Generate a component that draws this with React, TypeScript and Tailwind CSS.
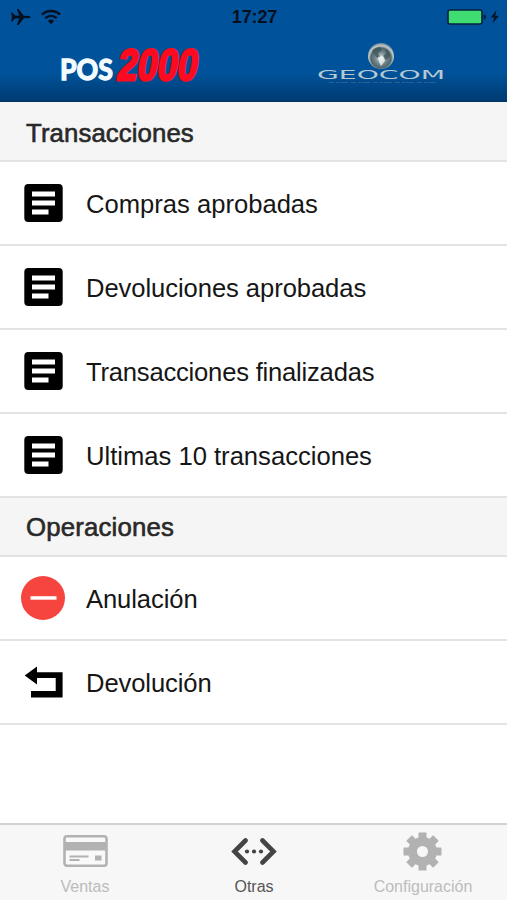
import type { ReactNode } from "react";

const font = "font-['Liberation_Sans',Arial,sans-serif]";

function StatusBar() {
  return (
    <div className="relative flex h-[34px] items-center justify-between pl-[10px] pr-[7px]">
      <div className="flex items-center gap-[9px]">
        <svg width="22" height="18" viewBox="0 0 22 18" fill="#04101f">
          <path d="M1 4.6h1.500l2.500 3 4.300.2L6.800 1h1.800l5.200 6.800 4.600.1c1.600.1 2.400.6 2.400 1.100s-.8 1-2.400 1.100l-4.600.1L8.600 17H6.800l2.500-6.800-4.300.2-2.500 3H1L2 9z" />
        </svg>
        <svg width="20" height="16" viewBox="0 0 20 16" fill="none" stroke="#04101f">
          <path d="M1 5.600a13 13 0 0 1 18 0" strokeWidth="2.300" />
          <path d="M4.300 9.200a8.200 8.200 0 0 1 11.400 0" strokeWidth="2.300" />
          <path d="M6.900 12a4.600 4.600 0 0 1 6.200 0L10 15.200z" fill="#04101f" stroke="none" />
        </svg>
      </div>
      <span className="absolute inset-x-0 pl-[2px] text-center text-[18px] font-bold leading-[34px] tracking-[-0.1px] text-[#04101f]">
        17:27
      </span>
      <svg width="53" height="18" viewBox="0 0 53 18">
        <rect x="1" y="2" width="34" height="14" rx="2" fill="#3fdc72" stroke="#06213f" strokeWidth="1.600" />
        <path d="M36.500 6.200c2 .6 2.600 1.600 2.600 2.800s-.6 2.200-2.600 2.800z" fill="#06213f" />
        <path d="M49.500 2 43.500 9.500h3.700L45.500 15.500l6.500-7.700h-3.700z" fill="#06172d" />
      </svg>
    </div>
  );
}

function Logos() {
  return (
    <svg width="507" height="68" viewBox="0 34 507 68" className="block">
      <defs>
        <radialGradient id="globe" cx="50%" cy="58%" r="55%">
          <stop offset="0" stopColor="#e2eaec" />
          <stop offset="0.4" stopColor="#75898f" />
          <stop offset="0.7" stopColor="#50666d" />
          <stop offset="0.86" stopColor="#c3cdce" />
          <stop offset="1" stopColor="#7e929b" />
        </radialGradient>
      </defs>
      <text x="60" y="80" fontFamily="Lato, sans-serif" fontSize="29" fontWeight="bold" fill="#f4fbff" stroke="#f4fbff" strokeWidth="1.300" textLength="53" lengthAdjust="spacingAndGlyphs">
        POS
      </text>
      <text transform="translate(116 79.500) skewX(-9)" fontFamily="'Liberation Sans', sans-serif" fontSize="44" fontWeight="bold" fill="#fb0a20" stroke="#fb0a20" strokeWidth="2.800" strokeLinejoin="round" textLength="80" lengthAdjust="spacingAndGlyphs">
        2000
      </text>
      <circle cx="381" cy="56" r="13" fill="url(#globe)" />
      <path d="M372 51c2-3 5-4 8-4l2 3-4 3 2 4-3 1-3-4zM385 49c3 1 5 4 5 7l-4 4-3-4 3-3z" fill="#3d545a" opacity="0.75" />
      <path d="M378 57l5-1 2 5-4 5-2-4z" fill="#eef4f4" opacity="0.8" />
      <text x="317" y="79" fontFamily="'DejaVu Sans', sans-serif" fontSize="12" fill="#b8c8d2" textLength="128" lengthAdjust="spacingAndGlyphs">
        GEOCOM
      </text>
      <path d="M329 82.500H437" stroke="#47749b" strokeWidth="1" strokeDasharray="5 2 3 1 8 3" opacity="0.55" />
    </svg>
  );
}

function DocIcon() {
  return (
    <svg width="44" height="44" viewBox="0 0 44 44">
      <rect x="3.300" y="3" width="38.400" height="38" rx="4" />
      <path d="M11 10.500h23v5H11zM11 19.500h23v5H11zM11 28.500h16.500v5H11z" fill="#fff" />
    </svg>
  );
}

function MinusIcon() {
  return (
    <svg width="44" height="44" viewBox="0 0 44 44">
      <circle cx="22" cy="22" r="22" fill="#f6443f" />
      <path d="M9.500 20.200h26v3.500h-26z" fill="#fff" />
    </svg>
  );
}

function ReturnIcon() {
  return (
    <svg width="44" height="44" viewBox="0 0 44 44">
      <path d="M3.700 15.500 16 6.500v5.800h25.600v25.300H10V31h24.700V18H16v6.500z" />
    </svg>
  );
}

function SectionTitle({ children, className }: { children: string; className: string }) {
  return (
    <h2 className={`h-[58px] bg-[#f5f5f5] pl-[26px] text-[25.8px] font-normal text-[#292929] [-webkit-text-stroke:0.6px_#292929] ${className}`}>
      {children}
    </h2>
  );
}

function Row({ icon, label, className = "" }: { icon: ReactNode; label: string; className?: string }) {
  return (
    <li className="flex h-[84px] items-center gap-[21px] border-t-2 border-[#e3e3e3] pl-[21px]">
      {icon}
      <span className={`pt-[2px] text-[25.6px] text-[#161616] ${className}`}>{label}</span>
    </li>
  );
}

function Tab({ icon, label, active }: { icon: ReactNode; label: string; active?: boolean }) {
  return (
    <button className={`flex flex-1 flex-col items-center pt-[4px] ${active ? "text-[#444]" : "text-[#b2b2b2]"}`}>
      {icon}
      <span className={`mt-[2px] pl-px text-[16px] leading-[20px] ${active ? "text-[#555]" : "text-[#bcbcbc]"}`}>{label}</span>
    </button>
  );
}

const transactions = [
  { label: "Compras aprobadas", className: "" },
  { label: "Devoluciones aprobadas", className: "tracking-[-0.07px]" },
  { label: "Transacciones finalizadas", className: "tracking-[-0.21px]" },
  { label: "Ultimas 10 transacciones", className: "" },
];

export default function App() {
  return (
    <div className={`flex h-[900px] w-[507px] flex-col overflow-hidden bg-white ${font}`}>
      <header className="h-[102px] shrink-0 bg-[linear-gradient(#00539b_0px,#00539b_72px,#003c73_100px,#002f5c_102px)]">
        <StatusBar />
        <Logos />
      </header>

      <main className="flex-1">
        <SectionTitle className="pt-[2px] leading-[58px] tracking-[0.08px]">Transacciones</SectionTitle>
        <ul>
          {transactions.map((item) => (
            <Row key={item.label} icon={<DocIcon />} {...item} />
          ))}
        </ul>
        <div className="border-t-2 border-[#e3e3e3]">
          <SectionTitle className="leading-[58px] tracking-[0.17px]">Operaciones</SectionTitle>
        </div>
        <ul className="-mt-px border-b-2 border-[#e3e3e3]">
          <Row icon={<MinusIcon />} label="Anulación" className="tracking-[-0.1px]" />
          <Row icon={<ReturnIcon />} label="Devolución" className="tracking-[-0.1px]" />
        </ul>
      </main>

      <nav className="flex h-[77px] shrink-0 border-t-2 border-[#d2d2d2] bg-[#f7f7f7]">
        <Tab
          label="Ventas"
          icon={
            <svg width="46" height="46" viewBox="0 0 46 46" fill="currentColor">
              <rect x="2.500" y="7.200" width="42" height="29.500" rx="2.500" fill="#f9f9f9" stroke="currentColor" strokeWidth="2.600" />
              <path d="M2.500 13h42v8.500h-42zM7.500 26.500h19v2h-19zM7.500 30h10v2h-10zM33 26.500h6.500v5H33z" />
            </svg>
          }
        />
        <Tab
          active
          label="Otras"
          icon={
            <svg width="46" height="46" viewBox="0 0 46 46" fill="currentColor">
              <path d="M14.500 11.500 3.500 22.500l11 11M31.500 11.500l11 11-11 11" fill="none" stroke="currentColor" strokeWidth="4.600" strokeLinecap="round" />
              <circle cx="16" cy="22.500" r="2.100" />
              <circle cx="23" cy="22.500" r="2.100" />
              <circle cx="30" cy="22.500" r="2.100" />
            </svg>
          }
        />
        <Tab
          label="Configuración"
          icon={
            <svg width="46" height="46" viewBox="0 0 46 46" fill="currentColor">
              {[0, 45, 90, 135].map((angle) => (
                <rect key={angle} x="18.500" y="3.500" width="8" height="38" rx="0.500" transform={`rotate(${angle} 22.500 22.500)`} />
              ))}
              <circle cx="22.500" cy="22.500" r="14.500" />
              <circle cx="22.500" cy="22.500" r="5.500" fill="#f7f7f7" />
            </svg>
          }
        />
      </nav>
    </div>
  );
}
